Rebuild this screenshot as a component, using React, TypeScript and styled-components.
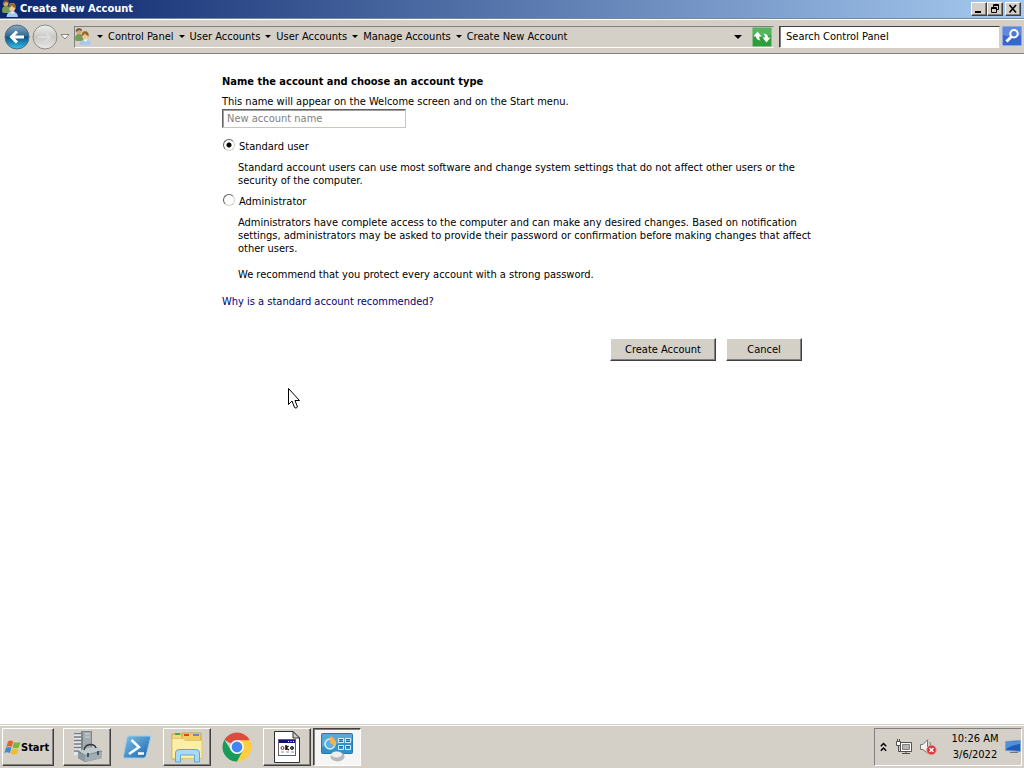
import React from "react";
import styled, { createGlobalStyle, css } from "styled-components";

const FACE = "#d4d0c8";

const GlobalStyle = createGlobalStyle`
  * { box-sizing: border-box; }
  body { margin: 0; }
  body, button, input {
    font-family: "DejaVu Sans Condensed", "DejaVu Sans", sans-serif;
    font-size: 11px;
    line-height: 13px;
    color: #000;
  }
`;

const Desktop = styled.div`
  display: flex;
  flex-direction: column;
  min-height: 100vh;
  background: #fff;
  overflow: hidden;
`;

const raised = css`
  border: 1px solid;
  border-color: #fff #404040 #404040 #fff;
  box-shadow: inset -1px -1px 0 #808080;
  background: ${FACE};
`;

const TitleBar = styled.header`
  display: flex;
  align-items: center;
  height: 19px;
  padding: 0 3px 1px 2px;
  gap: 2px;
  color: #fff;
  background: linear-gradient(90deg, #0a246a, #a6caf0);
  border-bottom: 1px solid #7b8699;
`;

const Title = styled.h1`
  flex: 1;
  margin: 0;
  font-size: 11px;
  line-height: 13px;
`;

const CaptionButton = styled.button<{ $apart?: boolean }>`
  ${raised}
  display: flex;
  width: 16px;
  height: 14px;
  padding: 0;
  margin-left: ${(p) => (p.$apart ? 0 : -2)}px;
  svg { display: block; width: 14px; height: 12px; }
`;

const Toolbar = styled.nav`
  display: flex;
  align-items: center;
  height: 35px;
  padding: 0 2px 0 4px;
  background: ${FACE};
  border-top: 1px solid #fff;
  border-bottom: 1px solid #808080;
`;

const PlainButton = styled.button`
  display: flex;
  flex: none;
  align-items: center;
  padding: 0;
  border: 0;
  background: none;
  svg { display: block; }
`;

const AddressBar = styled.div`
  display: flex;
  flex: 1;
  align-items: center;
  min-width: 0;
  height: 22px;
  margin-left: 4px;
  padding-right: 1px;
  border: 1px solid;
  border-color: #808080 ${FACE} #fff #808080;
`;

const Crumbs = styled.ol`
  display: flex;
  flex: 1;
  margin: 0 0 0 1px;
  padding: 0;
  list-style: none;
  white-space: nowrap;
`;

const Crumb = styled.li`
  display: flex;
  align-items: center;
  a { color: #000; text-decoration: none; }
`;

const Arrow = styled.span<{ $big?: boolean }>`
  width: 0;
  height: 0;
  margin: 0 ${(p) => (p.$big ? 10 : 5)}px;
  border: ${(p) => (p.$big ? 4 : 3)}px solid transparent;
  border-top-color: #000;
  border-bottom: 0;
`;

const SearchBox = styled.div`
  display: flex;
  align-items: center;
  gap: 2px;
  width: 243px;
  height: 22px;
  margin-left: 5px;
`;

const SearchInput = styled.input`
  flex: 1;
  min-width: 0;
  height: 22px;
  padding: 0 6px;
  border: 1px solid;
  border-color: #404040 #d4d0c8 #fff #404040;
  box-shadow: inset 1px 0 0 #808080;
  background: #fff;
  &::placeholder { color: #000; opacity: 1; }
`;

const Page = styled.main`
  flex: 1;
  padding: 21px 16px;
`;

const Form = styled.form`
  max-width: 580px;
  margin: 0 auto;
`;

const Heading = styled.h2`
  margin: 0 0 7px;
  font-size: 11px;
  line-height: 13px;
`;

const NameLabel = styled.label`
  display: block;
  margin-bottom: 1px;
`;

const NameInput = styled.input`
  display: block;
  width: 184px;
  height: 19px;
  margin-bottom: 11px;
  padding: 0 4px;
  border: 1px solid;
  border-color: #606060 #c8c5be #c8c5be #606060;
  box-shadow: inset 1px 1px 0 #a0a0a0;
  &::placeholder { color: #808080; opacity: 1; }
`;

const Option = styled.label`
  display: flex;
  align-items: center;
  gap: 4px;
  padding-left: 1px;
`;

const Radio = styled.input`
  appearance: none;
  width: 12px;
  height: 12px;
  margin: 0 0 2px;
  border: 1px solid;
  border-color: #606060 #d4d0c8 #d4d0c8 #606060;
  border-radius: 50%;
  background: #fff;
  &:checked { background: radial-gradient(circle, #000 2px, #fff 3px); }
`;

const Detail = styled.p`
  margin: 8px 0 7px;
  padding-left: 16px;
  white-space: nowrap;
`;

const Advice = styled(Detail)`
  margin: 13px 0 14px;
`;

const HelpLink = styled.a`
  color: #000080;
  text-decoration: none;
`;

const Actions = styled.div`
  display: flex;
  justify-content: flex-end;
  gap: 10px;
  margin-top: 30px;
`;

const PushButton = styled.button<{ $wide?: boolean }>`
  ${raised}
  width: ${(p) => (p.$wide ? 106 : 76)}px;
  height: 23px;
  padding: 0;
`;

const Pointer = styled.svg`
  position: absolute;
  left: 288px;
  top: 388px;
`;

const Taskbar = styled.footer`
  display: flex;
  align-items: center;
  height: 44px;
  padding: 0 2px 1px;
  background: ${FACE};
  border-top: 1px solid ${FACE};
  box-shadow: inset 0 1px 0 #fff;
`;

const StartButton = styled.button`
  ${raised}
  display: flex;
  align-items: center;
  width: 52px;
  height: 38px;
  margin: 2px 9px 0 0;
  padding: 0 1px;
  font-size: 11px;
  font-weight: bold;
`;

const Task = styled.button<{ $look: "raised" | "flat" | "active" }>`
  display: flex;
  align-items: center;
  justify-content: center;
  width: 48px;
  height: 38px;
  margin: 2px 2px 0 0;
  padding: 0;
  border: 1px solid transparent;
  background: none;
  ${(p) => p.$look === "raised" && raised}
  ${(p) =>
    p.$look === "active" &&
    css`
      border-color: #404040 #fff #fff #404040;
      box-shadow: inset 1px 1px 0 #808080;
      background: #f6f5f3;
    `}
`;

const Tray = styled.div`
  display: flex;
  align-items: center;
  width: 148px;
  height: 38px;
  margin: 2px 0 0 auto;
  padding-left: 5px;
  border: 1px solid;
  border-color: #808080 #fff #fff #808080;
`;

const Clock = styled.time`
  flex: 1;
  line-height: 16px;
  text-align: center;
`;

const TrayIcons = styled.div`
  display: flex;
  align-items: center;
  gap: 8px;
  margin-right: 8px;
  svg { flex: none; }
`;

const UsersIcon = () => (
  <svg width="16" height="17" viewBox="0 0 16 17">
    <path d="M0 11Q0 6 4 6Q9 6 9 11L8 13H1Z" fill="#779d50" />
    <circle cx="3.800" cy="3.500" r="2.600" fill="#d5a873" />
    <path d="M.8 4Q.6 0 4 .2Q7 0 7 3L4 2Z" fill="#725237" />
    <path d="M4.500 17Q5 11.500 10 11.500Q15.500 11.500 16 17Z" fill="#a8c8ec" />
    <path d="M7 6Q6.500 3 10 3Q14 3 13.500 7V9H7Z" fill="#c09a4c" />
    <circle cx="10.200" cy="8.500" r="2.900" fill="#efc59a" />
    <path d="M7 8Q8.500 7 10 5.500Q11 7.500 13.500 8Q14 3.500 10 3.500Q6.500 3.500 7 8Z" fill="#8c6833" />
    <path d="M8.500 11.500L10.500 14L12.500 11.500Z" fill="#fff" />
  </svg>
);

const NavIcons = () => (
  <>
    <PlainButton type="button" aria-label="Back">
      <svg width="26" height="26" viewBox="0 0 26 26">
        <defs>
          <linearGradient id="back" x2="0" y2="1">
            <stop stopColor="#8da9bd" />
            <stop offset=".45" stopColor="#2f6c98" />
            <stop offset=".5" stopColor="#0b5284" />
            <stop offset="1" stopColor="#35c4ee" />
          </linearGradient>
          <linearGradient id="forward" x2="0" y2="1">
            <stop stopColor="#eeeeec" />
            <stop offset=".5" stopColor="#c9c8c5" />
            <stop offset="1" stopColor="#e9e9e7" />
          </linearGradient>
        </defs>
        <circle cx="13" cy="13" r="12" fill="url(#back)" stroke="#4b6b80" />
        <path d="M20 13H8M13 7.500L7.500 13L13 18.500" fill="none" stroke="#fff" strokeWidth="3" />
      </svg>
    </PlainButton>
    <PlainButton type="button" aria-label="Forward">
      <svg width="30" height="26" viewBox="-2 0 30 26">
        <circle cx="13" cy="13" r="12" fill="url(#forward)" stroke="#8b8b8b" />
        <path d="M6 13H18M13 8L18 13L13 18" fill="none" stroke="#dcdbd9" strokeWidth="2" />
      </svg>
    </PlainButton>
    <PlainButton type="button" aria-label="Recent pages">
      <svg width="10" height="8" viewBox="0 0 10 8">
        <path d="M1 1.500H9L5 6Z" fill="#fff" stroke="#858585" />
      </svg>
    </PlainButton>
  </>
);

const RefreshIcon = () => (
  <svg width="20" height="20" viewBox="0 0 20 20">
    <rect x=".5" y=".5" width="19" height="19" rx="1" fill="#2d9e3a" stroke="#8cbf8d" />
    <path d="M1 1H19V8Q10 12 1 8Z" fill="#6cc774" opacity=".6" />
    <path d="M1.500 9.500L5.500 4.500L9.500 9.500H7.200Q7 11.500 8.500 13.500Q4 13 4 9.500Z" fill="#fff" />
    <path d="M18.500 10.500L14.500 15.500L10.500 10.500H12.800Q13 8.500 11.500 6.500Q16 7 16 10.500Z" fill="#fff" />
  </svg>
);

const SearchIcon = () => (
  <svg width="20" height="21" viewBox="0 0 20 21">
    <rect x=".5" y=".5" width="19" height="19" rx="1" fill="#3567d0" stroke="#8aa5e0" />
    <path d="M1 1H19V9Q10 12 1 9Z" fill="#80a5e5" opacity=".55" />
    <circle cx="12" cy="7.700" r="3.700" fill="#4d7bd3" stroke="#fff" strokeWidth="2" />
    <path d="M9.300 10.800L4.500 15.500" stroke="#fff" strokeWidth="3" />
  </svg>
);

const FlagIcon = () => (
  <svg width="17" height="17" viewBox="0 0 17 17">
    <path d="M4 2.500Q6.500 .5 9.200 2.500L7.700 8Q5 6.300 2.300 8Z" fill="#e8602c" />
    <path d="M10 3Q13 4.500 16.300 3L14.800 8.500Q12 10 8.500 8.500Z" fill="#79b63b" />
    <path d="M2 8.800Q4.700 7.200 7.400 8.800L5.900 14.200Q3.200 12.500.4 14.200Z" fill="#3c8bd5" />
    <path d="M8.200 9.300Q11 11 14.500 9.300L13 14.800Q10 16.300 6.700 14.800Z" fill="#f3bd26" />
  </svg>
);

const ServerIcon = () => (
  <svg width="32" height="32" viewBox="0 0 32 32">
    <path d="M3 1H10V24H3Z" fill="#e4e7e8" />
    <path d="M3 2.500H10M3 6H10M3 9.500H10M3 13H10M3 16.500H10M3 20H10" stroke="#737c80" strokeWidth="1.500" />
    <path d="M10 0H21V25L10 23Z" fill="#7d858a" />
    <path d="M12 1H20V20H12Z" fill="#a4abae" />
    <path d="M14 3H19M14 6H19" stroke="#cfd5d7" />
    <path d="M7 20L25 16L31 20V27L14 31L7 27Z" fill="#6f7e86" />
    <path d="M7 19.500L24 15.500L31 19.500L14 24Z" fill="#c0cacd" />
    <path d="M7 21L14 24.500V31L7 27Z" fill="#8d9ba2" />
    <path d="M14 24.500L31 20.500V27L14 31Z" fill="#a0adb3" />
    <path d="M13 19Q14 14 19 13.500Q24 13.500 25 17" fill="none" stroke="#34393b" strokeWidth="1.500" />
    <path d="M17 22V26M27 20V24" stroke="#485258" strokeWidth="2" />
  </svg>
);

const ShellIcon = () => (
  <svg width="30" height="24" viewBox="0 0 30 24">
    <defs>
      <linearGradient id="shell" x2="1" y2="1">
        <stop stopColor="#7cc0e8" />
        <stop offset="1" stopColor="#1765ac" />
      </linearGradient>
    </defs>
    <path d="M7 1H27Q29 1 28.500 3L24 21Q23.500 23 21.500 23H3Q1 23 1.500 21L5 3Q5.400 1 7 1Z" fill="url(#shell)" stroke="#a0cce6" />
    <path d="M9.500 5L17 12L7 19M16 18.500H22" fill="none" stroke="#fff" strokeWidth="2.500" />
  </svg>
);

const FolderIcon = () => (
  <svg width="34" height="32" viewBox="0 0 34 32">
    <path d="M2 3H11L13 6V28H2Z" fill="#f4d778" stroke="#c9a846" />
    <path d="M12 2H31V26H12Z" fill="#f0cc65" stroke="#c9a846" />
    <path d="M5 2H10V4H5Z" fill="#4ca64c" />
    <path d="M14 3H19V5H14Z" fill="#d4472e" />
    <path d="M23 3H29V5H23Z" fill="#4f94d0" />
    <path d="M2 7.500H13L15 9.500H32V27.500H2Z" fill="#fbeea6" stroke="#dfc76f" />
    <path d="M5.500 31V22Q5.500 18.500 9 18.500H26Q29.500 18.500 29.500 22V31H24.500V24H10.500V31Z" fill="#a8daf5" stroke="#63a6cf" />
  </svg>
);

const ChromeIcon = () => (
  <svg width="30" height="30" viewBox="0 0 30 30">
    <path d="M15 15L2.400 7.700A14.600 14.600 0 0 1 27.600 7.700Z" fill="#dc4b3e" />
    <path d="M15 8.200H27.900A14.600 14.600 0 0 1 15 29.600L20.900 18.400Z" fill="#ffcd40" />
    <path d="M2.400 7.700A14.600 14.600 0 0 0 15 29.600L20.900 18.400L9.100 18.400Z" fill="#169b58" />
    <circle cx="15" cy="15" r="6.900" fill="#fff" />
    <circle cx="15" cy="15" r="5.400" fill="#4285f4" />
  </svg>
);

const ScriptIcon = () => (
  <svg width="26" height="32" viewBox="0 0 26 32">
    <path d="M.5.500H19L25.500 7V31.500H.5Z" fill="#fff" stroke="#303030" />
    <path d="M19 .5V7H25.500Z" fill="#d4d0c8" stroke="#303030" />
    <rect x="4.500" y="8.500" width="17" height="16" fill="#fff" stroke="#606060" />
    <path d="M5 9H21V12H5Z" fill="#101078" />
    <path d="M14 10.500H15M16.500 10.500H17.500M19 10.500H20" stroke="#fff" />
    <circle cx="8.500" cy="17" r="1.500" fill="none" stroke="#8b2222" />
    <path d="M12 14V19M14.500 15L12 17L15 19" fill="none" stroke="#111" strokeWidth="1.500" />
    <circle cx="18" cy="17" r="1.500" fill="#467146" stroke="#222" />
    <path d="M7 21H10M12 21H15M17 21H20" stroke="#8c8ca8" />
  </svg>
);

const PanelIcon = () => (
  <svg width="32" height="30" viewBox="0 0 32 30">
    <rect x=".5" y="1.500" width="31" height="20" rx="1" fill="#3490c6" stroke="#2579a9" />
    <path d="M1 2H31V9L1 15Z" fill="#74c1e5" opacity=".5" />
    <circle cx="9" cy="12" r="5" fill="#5fb0dc" stroke="#d6effb" strokeWidth="1.500" />
    <path d="M9 11V4.500A6.500 6.500 0 0 1 14 14Z" fill="#f0b552" />
    <path d="M18 7.500H22M18 9.500H22M25 7.500H29M25 9.500H29M18 14.500H22M25 14.500H29" stroke="#1d6ca0" />
    <path d="M17.500 6.500H22.500V10.500H17.500ZM24.500 6.500H29.500V10.500H24.500ZM17.500 13.500H22.500V17.500H17.500ZM24.500 13.500H29.500V17.500H24.500Z" fill="none" stroke="#d6effb" />
    <ellipse cx="16.500" cy="24.500" rx="7" ry="5" fill="#b3b9be" />
    <ellipse cx="15.500" cy="22.500" rx="5.500" ry="3" fill="#eceff0" />
  </svg>
);

const ChevronIcon = () => (
  <svg width="7" height="10" viewBox="0 0 7 10">
    <path d="M.8 4.200L3.500 1.500L6.200 4.200M.8 8.700L3.500 6L6.200 8.700" fill="none" stroke="#000" strokeWidth="1.500" />
  </svg>
);

const NetworkIcon = () => (
  <svg width="17" height="16" viewBox="0 0 17 16">
    <path d="M5.500 3.500H16.500V12.500H5.500Z" fill="#fff" stroke="#505050" />
    <path d="M7.500 5.500H14.500V10.500H7.500Z" fill="#b7b5af" stroke="#808080" />
    <path d="M7 14.500H15M3.500 7V12.500H5.500M11 12.500V14.500" fill="none" stroke="#505050" />
    <path d="M1.500 2.500H5.500V6.500H1.500Z" fill="#fff" stroke="#505050" />
    <path d="M2.500 0V2M4.500 0V2" stroke="#505050" />
  </svg>
);

const VolumeIcon = () => (
  <svg width="17" height="17" viewBox="0 0 17 17">
    <path d="M.5 5.500H3L7.500.8V14.200L3 10.500H.5Z" fill="#f2f1ef" stroke="#777" />
    <path d="M9.500 3Q11 4.500 10.500 6" fill="none" stroke="#777" />
    <circle cx="11.500" cy="11" r="4.800" fill="#d73338" stroke="#ee9a9a" />
    <path d="M9.500 9L13.500 13M13.500 9L9.500 13" stroke="#fff" strokeWidth="1.500" />
  </svg>
);

const ShowDesktopIcon = () => (
  <svg width="16" height="14" viewBox="0 0 16 14">
    <path d="M.5 1.500L15.500.5V11.500L.5 10.500Z" fill="#215bb5" stroke="#7da4ce" />
    <path d="M1 2L15 1V4Q7 5 1 9Z" fill="#5290d9" />
    <path d="M5 12.500H13" stroke="#6c7884" />
  </svg>
);

const crumbs = ["Control Panel", "User Accounts", "User Accounts", "Manage Accounts", "Create New Account"];

const tasks: { name: string; look: "raised" | "flat" | "active"; icon: React.ReactNode }[] = [
  { name: "Server Manager", look: "raised", icon: <ServerIcon /> },
  { name: "PowerShell", look: "flat", icon: <ShellIcon /> },
  { name: "Windows Explorer", look: "raised", icon: <FolderIcon /> },
  { name: "Google Chrome", look: "flat", icon: <ChromeIcon /> },
  { name: "Script", look: "raised", icon: <ScriptIcon /> },
  { name: "Control Panel", look: "active", icon: <PanelIcon /> },
];

export default function App() {
  return (
    <Desktop>
      <GlobalStyle />
      <TitleBar>
        <UsersIcon />
        <Title>Create New Account</Title>
        <CaptionButton type="button" aria-label="Minimize">
          <svg viewBox="0 0 14 12"><path d="M3 9H9" stroke="#000" strokeWidth="2" /></svg>
        </CaptionButton>
        <CaptionButton type="button" aria-label="Restore">
          <svg viewBox="0 0 14 12">
            <path d="M5.500 5V1.500H10.500V6.500H9M5 2.500H11M3.500 4.500H8.500V9.500H3.500ZM3 5.500H9" fill="none" stroke="#000" />
          </svg>
        </CaptionButton>
        <CaptionButton type="button" aria-label="Close" $apart>
          <svg viewBox="0 0 14 12"><path d="M3.500 2L10 9.500M10 2L3.500 9.500" stroke="#000" strokeWidth="1.600" /></svg>
        </CaptionButton>
      </TitleBar>
      <Toolbar aria-label="Location">
        <NavIcons />
        <AddressBar>
          <UsersIcon />
          <Crumbs>
            {crumbs.map((name, i) => (
              <Crumb key={i}>
                <Arrow />
                <a href="#">{name}</a>
              </Crumb>
            ))}
          </Crumbs>
          <PlainButton type="button" aria-label="Previous locations">
            <Arrow $big />
          </PlainButton>
          <PlainButton type="button" aria-label="Refresh">
            <RefreshIcon />
          </PlainButton>
        </AddressBar>
        <SearchBox>
          <SearchInput aria-label="Search Control Panel" placeholder="Search Control Panel" />
          <PlainButton type="button" aria-label="Search">
            <SearchIcon />
          </PlainButton>
        </SearchBox>
      </Toolbar>
      <Page>
        <Form onSubmit={(e) => e.preventDefault()}>
          <Heading>Name the account and choose an account type</Heading>
          <NameLabel htmlFor="name">This name will appear on the Welcome screen and on the Start menu.</NameLabel>
          <NameInput id="name" placeholder="New account name" />
          <Option>
            <Radio type="radio" name="type" defaultChecked />
            Standard user
          </Option>
          <Detail>
            Standard account users can use most software and change system settings that do not affect other users or the
            <br />
            security of the computer.
          </Detail>
          <Option>
            <Radio type="radio" name="type" />
            Administrator
          </Option>
          <Detail>
            Administrators have complete access to the computer and can make any desired changes. Based on notification
            <br />
            settings, administrators may be asked to provide their password or confirmation before making changes that affect
            <br />
            other users.
          </Detail>
          <Advice>We recommend that you protect every account with a strong password.</Advice>
          <HelpLink href="#">Why is a standard account recommended?</HelpLink>
          <Actions>
            <PushButton type="submit" $wide>Create Account</PushButton>
            <PushButton type="button">Cancel</PushButton>
          </Actions>
        </Form>
      </Page>
      <Taskbar>
        <StartButton type="button">
          <FlagIcon />
          Start
        </StartButton>
        {tasks.map((t) => (
          <Task key={t.name} type="button" aria-label={t.name} $look={t.look}>
            {t.icon}
          </Task>
        ))}
        <Tray>
          <TrayIcons>
            <PlainButton type="button" aria-label="Show hidden icons"><ChevronIcon /></PlainButton>
            <NetworkIcon />
            <VolumeIcon />
          </TrayIcons>
          <Clock>
            10:26 AM
            <br />
            3/6/2022
          </Clock>
          <PlainButton type="button" aria-label="Show desktop"><ShowDesktopIcon /></PlainButton>
        </Tray>
      </Taskbar>
      <Pointer width="12" height="21" viewBox="0 0 12 21" aria-hidden="true">
        <path d="M.5.500V16.500L4 13L6.500 19.500Q8 21 9.500 19L7 12.500H11.500Z" fill="#fff" stroke="#000" />
      </Pointer>
    </Desktop>
  );
}
